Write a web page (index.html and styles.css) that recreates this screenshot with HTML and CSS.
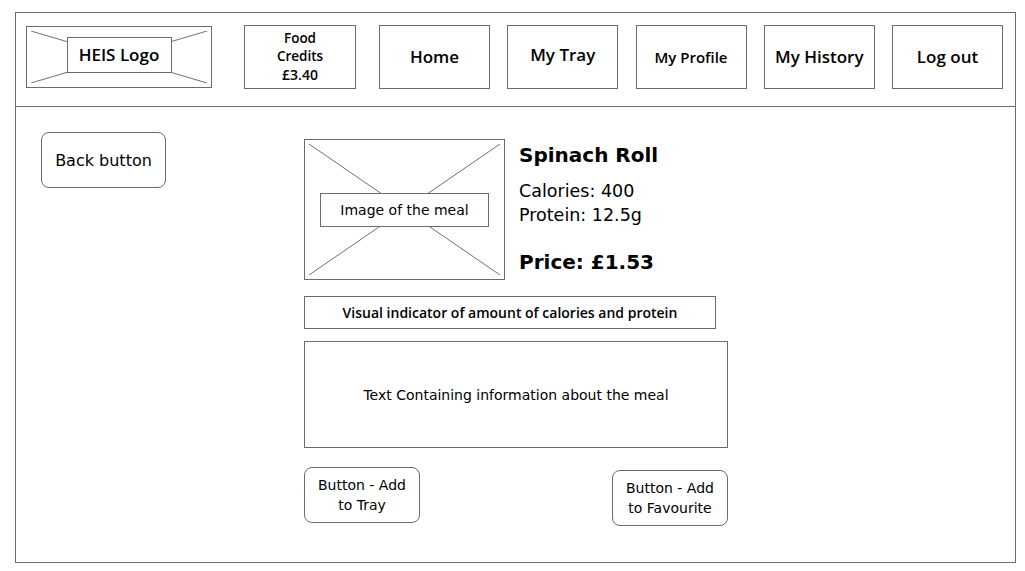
FILE: index.html
```html
<!DOCTYPE html>
<html lang="en">

<head>
    <meta charset="UTF-8" />
    <meta name="viewport" content="width=device-width, initial-scale=1.0" />
    <title>Meal Details</title>
    <link rel="stylesheet" href="styles.css">
</head>

<body>
    <div class="frame">
        <header class="topbar">
            <div class="logo">
                <svg class="cross" viewBox="0 0 100 100" preserveAspectRatio="none">
                    <line x1="0" y1="0" x2="100" y2="100" />
                    <line x1="100" y1="0" x2="0" y2="100" />
                </svg>
                <span class="logo-label">HEIS Logo</span>
            </div>
            <div class="credits">
                <span>Food</span>
                <span>Credits</span>
                <span class="credits-amount">£3.40</span>
            </div>
            <nav class="nav">
                <a class="nav-box" href="#">Home</a>
                <a class="nav-box nav-tray" href="#">My Tray</a>
                <a class="nav-box nav-small" href="#">My Profile</a>
                <a class="nav-box" href="#">My History</a>
                <a class="nav-box" href="#">Log out</a>
            </nav>
        </header>

        <main class="content">
            <button class="btn back-btn">Back button</button>

            <section class="meal">
                <div class="meal-top">
                    <div class="meal-image">
                        <svg class="cross" viewBox="0 0 100 100" preserveAspectRatio="none">
                            <line x1="0" y1="0" x2="100" y2="100" />
                            <line x1="100" y1="0" x2="0" y2="100" />
                        </svg>
                        <span class="image-label">Image of the meal</span>
                    </div>
                    <div class="meal-info">
                        <h1 class="meal-name">Spinach Roll</h1>
                        <p class="meal-stat stat-first">Calories: 400</p>
                        <p class="meal-stat">Protein: 12.5g</p>
                        <p class="meal-price">Price: £1.53</p>
                    </div>
                </div>

                <div class="indicator">Visual indicator of amount of calories and protein</div>

                <div class="description">Text Containing information about the meal</div>

                <div class="actions">
                    <button class="btn action-btn">Button - Add<br>to Tray</button>
                    <button class="btn action-btn fav-btn">Button - Add<br>to Favourite</button>
                </div>
            </section>
        </main>
    </div>
</body>

</html>
```

FILE: styles.css
```css
body {
    margin: 0;
    background: #ffffff;
    color: #000000;
    font-family: 'DejaVu Sans', sans-serif;
}

.frame {
    box-sizing: border-box;
    width: 1001px;
    height: 551px;
    margin: 12px 0 0 15px;
    border: 1px solid #6b6b6b;
}

/* header row */
.topbar {
    box-sizing: border-box;
    display: flex;
    align-items: center;
    height: 94px;
    padding: 0 0 6px 10px;
    border-bottom: 1px solid #6b6b6b;
}

.logo {
    position: relative;
    box-sizing: border-box;
    width: 186px;
    height: 62px;
    border: 1px solid #6b6b6b;
    display: flex;
    justify-content: center;
    align-items: center;
}

.cross {
    position: absolute;
    top: 4px;
    left: 4px;
    width: calc(100% - 8px);
    height: calc(100% - 8px);
}

.cross line {
    stroke: #707070;
    stroke-width: 1;
    vector-effect: non-scaling-stroke;
}

.logo-label {
    position: relative;
    box-sizing: border-box;
    width: 105px;
    height: 36px;
    margin-top: -4px;
    border: 1px solid #6b6b6b;
    background: #ffffff;
    display: flex;
    justify-content: center;
    align-items: center;
    font-family: 'Open Sans', sans-serif;
    font-weight: 600;
    font-size: 17px;
}

.credits {
    box-sizing: border-box;
    width: 112px;
    height: 64px;
    margin-left: 32px;
    border: 1px solid #6b6b6b;
    display: flex;
    flex-direction: column;
    align-items: center;
    justify-content: center;
    font-family: 'Open Sans', sans-serif;
    font-weight: 600;
    font-size: 13.5px;
    line-height: 18.5px;
}

.credits-amount {
    font-size: 14px;
}

.nav {
    display: flex;
    justify-content: space-between;
    width: 624px;
    margin-left: 23px;
}

.nav-box {
    box-sizing: border-box;
    width: 111px;
    height: 64px;
    border: 1px solid #6b6b6b;
    display: flex;
    justify-content: center;
    align-items: center;
    color: #000000;
    text-decoration: none;
    font-family: 'Open Sans', sans-serif;
    font-weight: 600;
    font-size: 17px;
}

.nav-tray {
    padding-bottom: 4px;
}

.nav-small {
    font-size: 15px;
}

/* page body */
.content {
    display: flex;
    align-items: flex-start;
    padding: 25px 0 0 25px;
}

.btn {
    box-sizing: border-box;
    background: #ffffff;
    border: 1px solid #6b6b6b;
    border-radius: 8px;
    color: #000000;
    font-family: 'DejaVu Sans', sans-serif;
    cursor: pointer;
}

.back-btn {
    width: 125px;
    height: 56px;
    font-size: 16px;
}

.meal {
    margin: 7px 0 0 138px;
    width: 424px;
}

.meal-top {
    display: flex;
    align-items: flex-start;
}

.meal-image {
    position: relative;
    box-sizing: border-box;
    width: 201px;
    height: 141px;
    border: 1px solid #6b6b6b;
    display: flex;
    justify-content: center;
    align-items: center;
}

.image-label {
    position: relative;
    box-sizing: border-box;
    width: 169px;
    height: 34px;
    border: 1px solid #6b6b6b;
    background: #ffffff;
    display: flex;
    justify-content: center;
    align-items: center;
    font-size: 14px;
}

.meal-info {
    margin-left: 14px;
    padding-top: 4px;
}

.meal-name {
    margin: 0;
    font-size: 20px;
    line-height: 24px;
    font-weight: bold;
}

.meal-stat {
    margin: 0;
    font-size: 17.5px;
    line-height: 24px;
}

.stat-first {
    margin-top: 12px;
}

.meal-price {
    margin: 23px 0 0;
    font-size: 20px;
    line-height: 24px;
    font-weight: bold;
}

.indicator {
    box-sizing: border-box;
    width: 412px;
    height: 33px;
    margin-top: 16px;
    border: 1px solid #6b6b6b;
    display: flex;
    justify-content: center;
    align-items: center;
    font-family: 'Open Sans', sans-serif;
    font-weight: 600;
    font-size: 14px;
}

.description {
    box-sizing: border-box;
    width: 424px;
    height: 107px;
    margin-top: 12px;
    border: 1px solid #6b6b6b;
    display: flex;
    justify-content: center;
    align-items: center;
    font-size: 14px;
}

.actions {
    display: flex;
    justify-content: space-between;
    align-items: flex-start;
    margin-top: 19px;
}

.action-btn {
    width: 116px;
    height: 56px;
    padding: 0;
    font-size: 14px;
    line-height: 20px;
}

.fav-btn {
    margin-top: 3px;
}
```
